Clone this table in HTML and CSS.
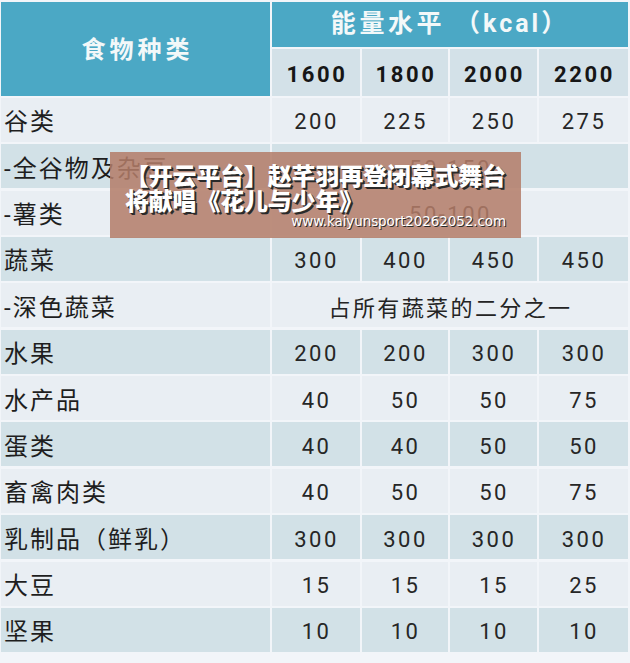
FILE: index.html
```html
<!DOCTYPE html>
<html lang="zh">
<head>
<meta charset="utf-8">
<title>食物种类与能量水平</title>
<link rel="stylesheet" href="styles.css">
</head>
<body>
<div class="page">
  <div class="table">
    <div class="cell head food">食物种类</div>
    <div class="cell head energy">能量水平 <span class="paren">（kcal）</span></div>
    <div class="cell sub num">1600</div>
    <div class="cell sub num">1800</div>
    <div class="cell sub num">2000</div>
    <div class="cell sub num">2200</div>

    <div class="cell name light">谷类</div>
    <div class="cell val light">200</div>
    <div class="cell val light">225</div>
    <div class="cell val light">250</div>
    <div class="cell val light">275</div>

    <div class="cell name dark">-全谷物及杂豆</div>
    <div class="cell val dark span4">50-150</div>

    <div class="cell name light">-薯类</div>
    <div class="cell val light span4">50-100</div>

    <div class="cell name dark">蔬菜</div>
    <div class="cell val dark">300</div>
    <div class="cell val dark">400</div>
    <div class="cell val dark">450</div>
    <div class="cell val dark">450</div>

    <div class="cell name light">-深色蔬菜</div>
    <div class="cell val light span4 note">占所有蔬菜的二分之一</div>

    <div class="cell name dark">水果</div>
    <div class="cell val dark">200</div>
    <div class="cell val dark">200</div>
    <div class="cell val dark">300</div>
    <div class="cell val dark">300</div>

    <div class="cell name light">水产品</div>
    <div class="cell val light">40</div>
    <div class="cell val light">50</div>
    <div class="cell val light">50</div>
    <div class="cell val light">75</div>

    <div class="cell name dark">蛋类</div>
    <div class="cell val dark">40</div>
    <div class="cell val dark">40</div>
    <div class="cell val dark">50</div>
    <div class="cell val dark">50</div>

    <div class="cell name light">畜禽肉类</div>
    <div class="cell val light">40</div>
    <div class="cell val light">50</div>
    <div class="cell val light">50</div>
    <div class="cell val light">75</div>

    <div class="cell name dark">乳制品（鲜乳）</div>
    <div class="cell val dark">300</div>
    <div class="cell val dark">300</div>
    <div class="cell val dark">300</div>
    <div class="cell val dark">300</div>

    <div class="cell name light">大豆</div>
    <div class="cell val light">15</div>
    <div class="cell val light">15</div>
    <div class="cell val light">15</div>
    <div class="cell val light">25</div>

    <div class="cell name dark">坚果</div>
    <div class="cell val dark">10</div>
    <div class="cell val dark">10</div>
    <div class="cell val dark">10</div>
    <div class="cell val dark">10</div>
  </div>

  <div class="banner">
    <div class="banner-title">【开云平台】赵芊羽再登闭幕式舞台</div>
    <div class="banner-title">将献唱《花儿与少年》</div>
    <div class="banner-url">www.kaiyunsport20262052.com</div>
  </div>
</div>
</body>
</html>
```

FILE: styles.css
```css
* { box-sizing: border-box; }

html, body {
  margin: 0;
  padding: 0;
}

body {
  width: 630px;
  height: 663px;
  overflow: hidden;
  background: #f2f5f9;
  font-family: "Roboto", "Noto Sans CJK SC", sans-serif;
}

.page {
  position: relative;
  width: 630px;
  height: 663px;
}

.table {
  display: grid;
  grid-template-columns: 269px 88px 86px 87px 89px;
  grid-template-rows: 44.6px 46.6px repeat(12, 44px);
  column-gap: 2px;
  row-gap: 2.36px;
  padding: 2px 0 0 1px;
}

.cell {
  display: flex;
  align-items: center;
  justify-content: center;
}

.head {
  background: #4ba8c5;
  color: #f3f8f9;
  font-weight: 700;
  font-size: 24px;
}

.food {
  grid-row: 1 / span 2;
  letter-spacing: 4px;
  padding-left: 4px;
  padding-bottom: 2px;
}

.energy {
  grid-column: 2 / span 4;
  font-size: 25px;
  letter-spacing: 3.6px;
  white-space: pre;
  padding-bottom: 6px;
}

.paren {
  letter-spacing: 3px;
}

.sub {
  background: #d3e1e8;
  color: #161616;
  font-weight: 700;
  font-size: 22px;
  letter-spacing: 2.6px;
  padding-left: 2px;
  padding-top: 4px;
}

.light { background: #e9eef3; }
.dark { background: #d2e1e7; }

.name {
  justify-content: flex-start;
  padding-left: 3px;
  font-size: 24px;
  letter-spacing: 2px;
  color: #1e1e1e;
}

.val {
  font-size: 22px;
  letter-spacing: 2.5px;
  color: #262626;
  padding-left: 1px;
  padding-top: 4px;
}

.span4 {
  grid-column: 2 / span 4;
}

.note {
  letter-spacing: 2.4px;
  color: #242424;
  padding-top: 2px;
}

.banner {
  position: absolute;
  left: 110px;
  top: 152px;
  width: 411px;
  height: 86px;
  background: rgba(179, 125, 105, 0.86);
  padding: 10px 0 0 15px;
  display: flex;
  flex-direction: column;
}

.banner-title {
  font-family: "Noto Sans CJK SC", sans-serif;
  font-weight: 900;
  font-size: 24px;
  line-height: 25px;
  color: #ffffff;
  letter-spacing: -0.2px;
  white-space: nowrap;
  text-shadow: 2px 2px 0 #2a2a2a, 1px 1px 0 #2a2a2a;
}

.banner-url {
  align-self: flex-end;
  margin-top: 1px;
  margin-right: 15px;
  font-family: "DejaVu Sans", sans-serif;
  font-size: 13.5px;
  line-height: 16px;
  color: #ffffff;
  letter-spacing: -0.1px;
  white-space: nowrap;
  text-shadow: 1px 1px 0 #2a2a2a;
}
```
